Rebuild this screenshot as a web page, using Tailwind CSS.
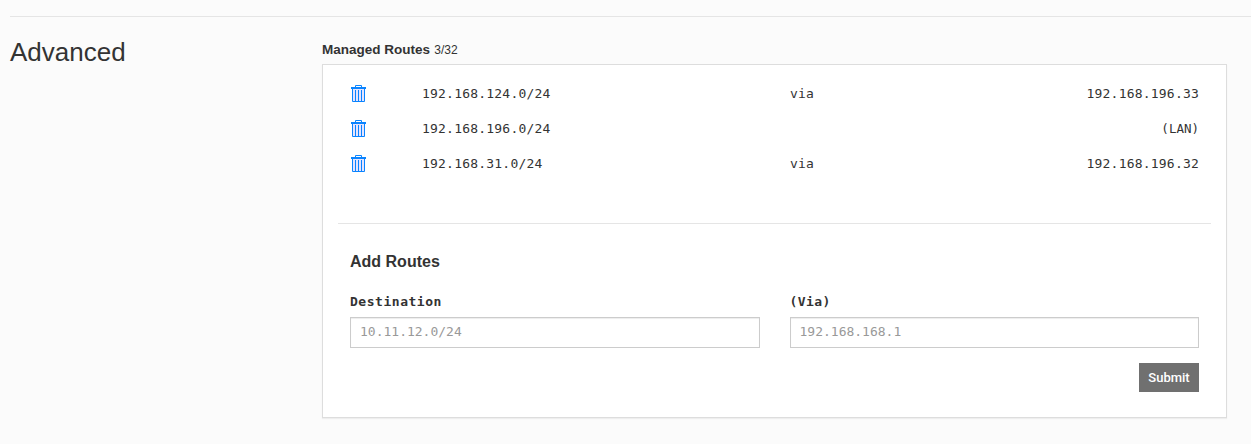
<!DOCTYPE html>
<html lang="en">

<head>
    <meta charset="UTF-8">
    <meta name="viewport" content="width=device-width, initial-scale=1.0">
    <script src="https://cdn.jsdelivr.net/npm/@tailwindcss/browser@4"></script>
    <title>Managed Routes</title>
</head>

<body class="bg-[#fbfbfb] text-[#333] font-['Liberation_Sans',Arial,sans-serif] h-[444px] overflow-hidden">
    <svg class="hidden">
        <symbol id="trash" viewBox="0 0 16 18" fill="none" stroke="#0a84ff">
            <path d="M5.5 2.5V.5h6v2" />
            <path d="M1 3h15" stroke-width="2" />
            <path d="M2.5 4v12.5h12V4" fill="#e4e4ff" />
            <path d="M5.5 5v11M8.5 5v11M11.5 5v11" />
        </symbol>
    </svg>

    <main class="ml-[10px] pt-4">
        <hr class="border-[#e5e5e5]">

        <div class="flex pt-[19px]">
            <h2 class="w-[312px] text-[26px] leading-8">Advanced</h2>

            <section class="w-[905px]">
                <p class="pt-[5px] h-7 text-[12px] leading-[18px]"><b class="text-[13.5px]">Managed Routes</b> <span class="ml-px">3/32</span></p>

                <div class="h-[354px] px-[15px] pt-[11px] bg-white border border-[#ddd] shadow-[0_1px_1px_rgba(0,0,0,0.05)]">
                    <!-- Routes -->
                    <div class="h-[147px] px-3 text-[13px] tracking-[0.21px] leading-[35px] font-['DejaVu_Sans_Mono',monospace]">
                        <div class="flex h-[35px]">
                            <div class="w-[72px] pt-[9px]"><svg class="w-4 h-[18px]"><use href="#trash" /></svg></div>
                            <span class="w-[368px]">192.168.124.0/24</span>
                            <span>via</span>
                            <span class="ml-auto">192.168.196.33</span>
                        </div>
                        <div class="flex h-[35px]">
                            <div class="w-[72px] pt-[9px]"><svg class="w-4 h-[18px]"><use href="#trash" /></svg></div>
                            <span>192.168.196.0/24</span>
                            <span class="ml-auto text-[12.5px] tracking-normal">(LAN)</span>
                        </div>
                        <div class="flex h-[35px]">
                            <div class="w-[72px] pt-[9px]"><svg class="w-4 h-[18px]"><use href="#trash" /></svg></div>
                            <span class="w-[368px]">192.168.31.0/24</span>
                            <span>via</span>
                            <span class="ml-auto">192.168.196.32</span>
                        </div>
                    </div>

                    <hr class="border-[#e5e5e5]">

                    <!-- Add Routes -->
                    <form class="px-3 pt-7">
                        <h3 class="text-base leading-5 font-bold">Add Routes</h3>
                        <div class="mt-5 grid grid-cols-2 gap-[30px] text-[13px] font-['DejaVu_Sans_Mono',monospace]">
                            <label class="block">
                                <span class="block h-[25px] leading-[19px] font-bold tracking-[0.53px]">Destination</span>
                                <input class="block w-full h-[31px] px-[9px] pb-0.5 bg-white border border-[#ccc] shadow-[inset_0_1px_1px_rgba(0,0,0,0.075)] placeholder:text-[#999]" placeholder="10.11.12.0/24">
                            </label>
                            <label class="block">
                                <span class="block h-[25px] leading-[19px] font-bold tracking-[0.4px]">(Via)</span>
                                <input class="block w-full h-[31px] px-[9px] pb-0.5 bg-white border border-[#ccc] shadow-[inset_0_1px_1px_rgba(0,0,0,0.075)] placeholder:text-[#999]" placeholder="192.168.168.1">
                            </label>
                        </div>
                        <button type="button" class="block ml-auto mt-[15px] w-[60px] h-[29px] bg-[#707070] text-white text-[13px] font-medium font-[Roboto,sans-serif]">Submit</button>
                    </form>
                </div>
            </section>
        </div>
    </main>
</body>

</html>
